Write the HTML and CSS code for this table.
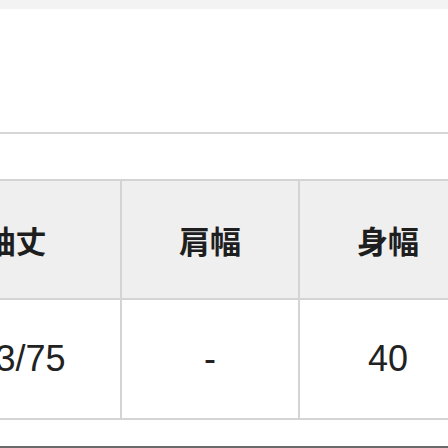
FILE: index.html
```html
<!DOCTYPE html>
<html lang="ja">
<head>
<meta charset="utf-8">
<link rel="stylesheet" href="styles.css">
</head>
<body>
<div class="topbar"></div>
<div class="block"></div>
<div class="gap"></div>
<div class="table">
  <div class="cell head">袖丈</div>
  <div class="cell head">肩幅</div>
  <div class="cell head">身幅</div>
  <div class="cell data first">73/75</div>
  <div class="cell data">-</div>
  <div class="cell data">40</div>
</div>
<div class="footer"></div>
</body>
</html>
```
FILE: styles.css
```css
html, body {
  margin: 0;
  padding: 0;
  background: #ffffff;
  width: 448px;
  height: 448px;
  overflow: hidden;
}
.topbar {
  height: 9px;
  background: #f3f3f3;
}
.block {
  height: 123px;
  border-bottom: 2px solid #d6d6d6;
}
.gap {
  height: 45px;
}
.table {
  display: grid;
  grid-template-columns: 211px 178px 178px;
  margin-left: -89px;
  border-top: 2px solid #d4d4d4;
  width: 567px;
}
.cell {
  display: flex;
  align-items: center;
  justify-content: center;
  border-right: 2px solid #d4d4d4;
  border-bottom: 2px solid #d4d4d4;
}
.head {
  height: 117px;
  background: #efefef;
  font-family: "Noto Sans CJK JP", sans-serif;
  font-weight: 700;
  font-size: 31px;
  color: #1e1e1e;
}
.data {
  height: 118px;
  background: #ffffff;
  font-family: "Liberation Sans", Arial, sans-serif;
  font-size: 36px;
  color: #222222;
}
.first {
  padding-left: 10px;
}
.footer {
  height: 26px;
  border-bottom: 2px solid #6a6a6a;
}
```
